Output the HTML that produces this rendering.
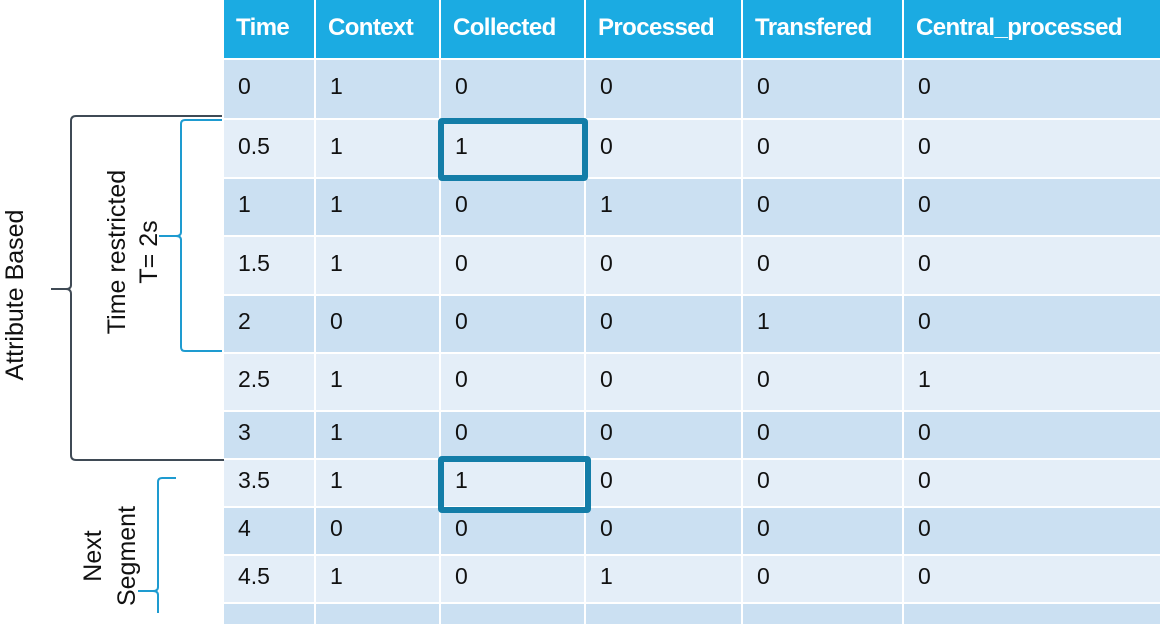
<!DOCTYPE html><html><head><style>
body{margin:0;width:1163px;height:613px;overflow:hidden;background:#fff;font-family:"Liberation Sans",sans-serif;position:relative}
.r{position:absolute;left:224px;display:flex;gap:2px}
.r div{box-sizing:border-box;padding-left:14px;padding-bottom:5px;display:flex;align-items:center;font-size:23px;color:#111;height:100%}
.r div:nth-child(1){width:90px}.r div:nth-child(2){width:123px}.r div:nth-child(3){width:143px}.r div:nth-child(4){width:155px}.r div:nth-child(5){width:159px}.r div:nth-child(6){width:256px}
.h div{background:#1BABE2;color:#fff;font-weight:bold;font-size:24px;letter-spacing:-0.6px;padding-left:12px;padding-bottom:2px}
.d div{background:#CBE0F2}.l div{background:#E4EEF8}
.box{position:absolute;border:6px solid #137DA8;border-radius:4px;box-sizing:border-box}
.rt{position:absolute;transform:rotate(-90deg);transform-origin:center;font-size:25px;color:#111;text-align:center;line-height:30px;white-space:nowrap}
</style></head><body>
<div class="r h" style="top:0;height:58px"><div>Time</div><div>Context</div><div>Collected</div><div>Processed</div><div>Transfered</div><div>Central_processed</div></div>
<div class="r d" style="top:60px;height:58px"><div>0</div><div>1</div><div>0</div><div>0</div><div>0</div><div>0</div></div>
<div class="r l" style="top:120px;height:57px"><div>0.5</div><div>1</div><div>1</div><div>0</div><div>0</div><div>0</div></div>
<div class="r d" style="top:179px;height:56px"><div>1</div><div>1</div><div>0</div><div>1</div><div>0</div><div>0</div></div>
<div class="r l" style="top:237px;height:57px"><div>1.5</div><div>1</div><div>0</div><div>0</div><div>0</div><div>0</div></div>
<div class="r d" style="top:296px;height:56px"><div>2</div><div>0</div><div>0</div><div>0</div><div>1</div><div>0</div></div>
<div class="r l" style="top:354px;height:56px"><div>2.5</div><div>1</div><div>0</div><div>0</div><div>0</div><div>1</div></div>
<div class="r d" style="top:412px;height:46px"><div>3</div><div>1</div><div>0</div><div>0</div><div>0</div><div>0</div></div>
<div class="r l" style="top:460px;height:46px"><div>3.5</div><div>1</div><div>1</div><div>0</div><div>0</div><div>0</div></div>
<div class="r d" style="top:508px;height:46px"><div>4</div><div>0</div><div>0</div><div>0</div><div>0</div><div>0</div></div>
<div class="r l" style="top:556px;height:46px"><div>4.5</div><div>1</div><div>0</div><div>1</div><div>0</div><div>0</div></div>
<div class="r d" style="top:604px;height:20px"><div></div><div></div><div></div><div></div><div></div><div></div></div>
<div class="box" style="left:438px;top:118px;width:150px;height:63px"></div>
<div class="box" style="left:438px;top:456px;width:153px;height:57px"></div>
<svg width="230" height="613" style="position:absolute;left:0;top:0" fill="none">
<path d="M222 116 H76 Q71 116 71 121 V285 Q71 289 66 289 H51 M66 289 Q71 289 71 294 V455 Q71 460 76 460 H224" stroke="#3f4a55" stroke-width="2"/>
<path d="M222 120 H185 Q181 120 181 124 V232 Q181 236 176 236 H159 M176 236 Q181 236 181 240 V347 Q181 351 185 351 H222" stroke="#1E9BD0" stroke-width="2"/>
<path d="M176 478 H162 Q158 478 158 482 V587 Q158 591 153 591 H138 M153 591 Q158 591 158 595 V613" stroke="#1E9BD0" stroke-width="2"/>
</svg>
<div class="rt" style="left:-80px;top:280px;width:190px">Attribute Based</div>
<div class="rt" style="left:38px;top:220px;width:190px;line-height:32px">Time restricted<br>T= 2s</div>
<div class="rt" style="left:50px;top:522px;width:120px;line-height:34px">Next<br>Segment</div>
</body></html>
